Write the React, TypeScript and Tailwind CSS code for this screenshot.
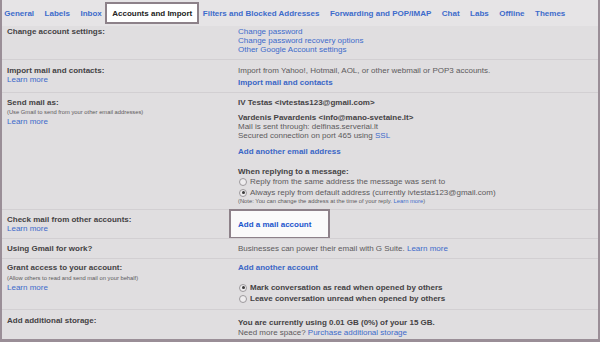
import React from "react";

const tabs = [
  "General",
  "Labels",
  "Inbox",
  "Accounts and Import",
  "Filters and Blocked Addresses",
  "Forwarding and POP/IMAP",
  "Chat",
  "Labs",
  "Offline",
  "Themes",
];

const A = ({ children, bold }: { children: React.ReactNode; bold?: boolean }) => (
  <span className={bold ? "font-bold text-[#3a66c6]" : "text-[#3d6bcb]"}>{children}</span>
);

const Radio = ({ checked }: { checked?: boolean }) => (
  <span className="ml-px mr-[3px] w-[8px] h-[8px] rounded-full border border-[#9c999c] bg-[#eeecee] flex items-center justify-center shrink-0">
    {checked && <span className="w-[3px] h-[3px] rounded-full bg-[#3a3a3a]" />}
  </span>
);

const Label = ({ children }: { children: React.ReactNode }) => (
  <div className="font-bold text-[#444244]">{children}</div>
);

const Small = ({ children, className = "" }: { children: React.ReactNode; className?: string }) => (
  <div className={`text-[5.8px] text-[#5c5a5c] ${className}`}>{children}</div>
);

export default function App() {
  return (
    <div className="w-[600px] h-[342px] overflow-hidden bg-[#e0dee0] border-x-2 border-b-[3px] border-[#9a8e97] font-['Liberation_Sans',Arial,sans-serif] text-[8px] leading-[9px] text-[#5c5a5c] flex flex-col">
      {/* tabs */}
      <div className="h-[26px] bg-[#e6e4e6] flex items-center gap-[10.5px] pl-[2.3px] shrink-0">
        {tabs.map((t) =>
          t === "Accounts and Import" ? (
            <div
              key={t}
              className="-mx-[7px] h-[22px] flex items-center px-[5px] border-2 border-[#8d8189] bg-white font-bold text-[#222] whitespace-nowrap"
            >
              {t}
            </div>
          ) : (
            <div key={t} className="font-bold text-[#3d6bcb] whitespace-nowrap">
              {t}
            </div>
          )
        )}
      </div>

      {/* change account settings */}
      <div className="flex pt-px pb-[5px]">
        <div className="w-[236px] pl-[5px] shrink-0">
          <Label>Change account settings:</Label>
        </div>
        <div className="flex-1">
          <div><A>Change password</A></div>
          <div><A>Change password recovery options</A></div>
          <div><A>Other Google Account settings</A></div>
        </div>
      </div>

      {/* import */}
      <div className="flex border-t border-[#d2cfd2] pt-[6px] pb-[5px]">
        <div className="w-[236px] pl-[5px] shrink-0">
          <Label>Import mail and contacts:</Label>
          <div><A>Learn more</A></div>
        </div>
        <div className="flex-1">
          <div>Import from Yahoo!, Hotmail, AOL, or other webmail or POP3 accounts.</div>
          <div className="mt-[3px]"><A bold>Import mail and contacts</A></div>
        </div>
      </div>

      {/* send mail as */}
      <div className="flex border-t border-[#d2cfd2] pt-[5px] pb-[4px]">
        <div className="w-[236px] pl-[5px] shrink-0">
          <Label>Send mail as:</Label>
          <Small className="leading-[9px] mt-px">(Use Gmail to send from your other email addresses)</Small>
          <div><A>Learn more</A></div>
        </div>
        <div className="flex-1">
          <div className="font-bold text-[#444244]">IV Testas &lt;ivtestas123@gmail.com&gt;</div>
          <div className="mt-[6px] font-bold text-[#444244]">Vardenis Pavardenis &lt;info@mano-svetaine.lt&gt;</div>
          <div>Mail is sent through: delfinas.serveriai.lt</div>
          <div>
            Secured connection on port 465 using <A>SSL</A>
          </div>
          <div className="mt-[7px]"><A bold>Add another email address</A></div>
          <div className="mt-[11px] font-bold text-[#444244]">When replying to a message:</div>
          <div className="flex items-center h-[11px]">
            <Radio />
            <span>Reply from the same address the message was sent to</span>
          </div>
          <div className="flex items-center h-[11px]">
            <Radio checked />
            <span>Always reply from default address (currently ivtestas123@gmail.com)</span>
          </div>
          <Small className="leading-[7px]">
            (Note: You can change the address at the time of your reply. <A>Learn more</A>)
          </Small>
        </div>
      </div>

      {/* check mail */}
      <div className="flex border-t border-[#d2cfd2]">
        <div className="w-[236px] pl-[5px] pt-[5px] pb-[5px] shrink-0">
          <Label>Check mail from other accounts:</Label>
          <div><A>Learn more</A></div>
        </div>
        <div className="flex-1 flex">
          <div className="-ml-[9px] -mt-px -mb-px w-[101px] flex items-center pl-[7px] border-2 border-[#8d8189] bg-[#fafafa]">
            <span className="font-bold text-[#1a55cc]">Add a mail account</span>
          </div>
        </div>
      </div>

      {/* gmail for work */}
      <div className="flex border-t border-[#d2cfd2] pt-[5px] pb-[5px]">
        <div className="w-[236px] pl-[5px] shrink-0">
          <Label>Using Gmail for work?</Label>
        </div>
        <div className="flex-1">
          Businesses can power their email with G Suite. <A>Learn more</A>
        </div>
      </div>

      {/* grant access */}
      <div className="flex border-t border-[#d2cfd2] pt-[4px] pb-[5px]">
        <div className="w-[236px] pl-[5px] shrink-0">
          <Label>Grant access to your account:</Label>
          <Small className="leading-[9px] mt-[2px]">(Allow others to read and send mail on your behalf)</Small>
          <div><A>Learn more</A></div>
        </div>
        <div className="flex-1">
          <div><A bold>Add another account</A></div>
          <div className="mt-[10px] flex items-center h-[11px]">
            <Radio checked />
            <span className="font-bold text-[#444244]">Mark conversation as read when opened by others</span>
          </div>
          <div className="flex items-center h-[11px]">
            <Radio />
            <span className="font-bold text-[#444244]">Leave conversation unread when opened by others</span>
          </div>
        </div>
      </div>

      {/* storage */}
      <div className="flex flex-1 border-t border-[#d2cfd2]">
        <div className="w-[236px] pl-[5px] pt-[6px] shrink-0">
          <Label>Add additional storage:</Label>
        </div>
        <div className="flex-1 pt-[8px]">
          <div className="font-bold text-[#444244]">You are currently using 0.01 GB (0%) of your 15 GB.</div>
          <div className="mt-px">
            Need more space? <A>Purchase additional storage</A>
          </div>
        </div>
      </div>
    </div>
  );
}
